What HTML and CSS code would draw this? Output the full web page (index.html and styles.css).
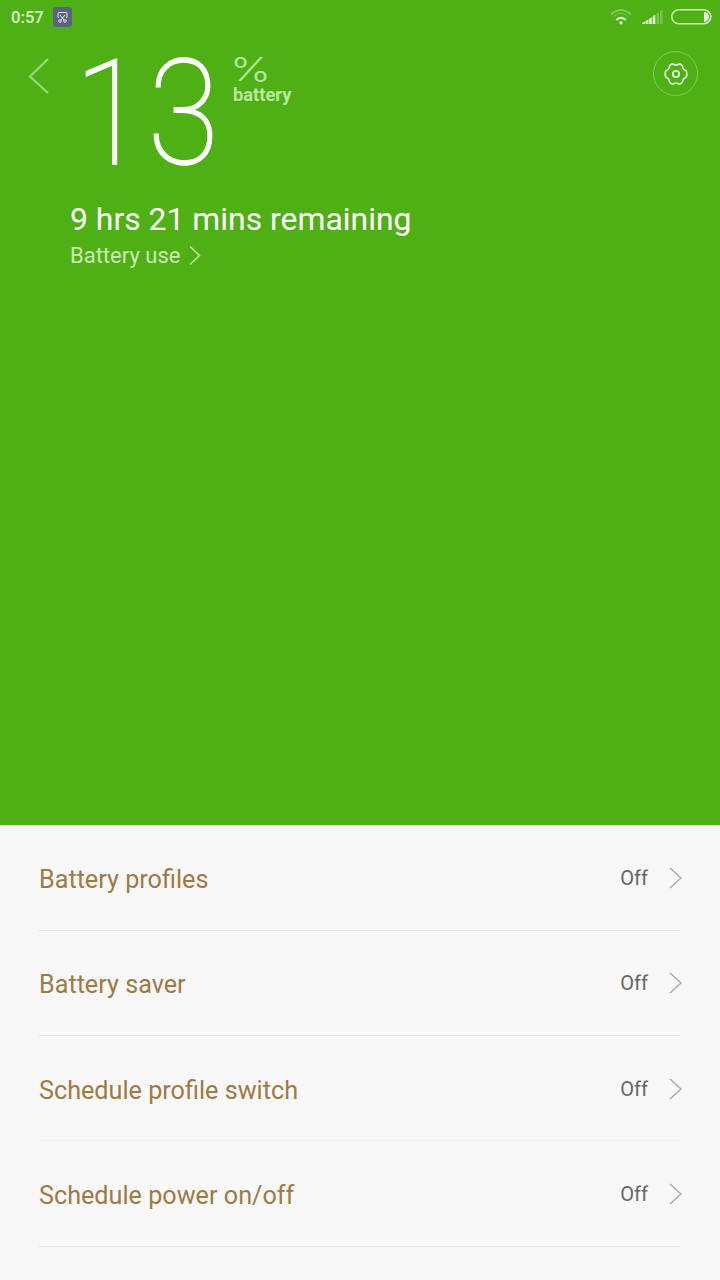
FILE: index.html
```html
<!DOCTYPE html>
<html lang="en">
<head>
  <meta charset="UTF-8" />
  <meta name="viewport" content="width=device-width, initial-scale=1.0" />
  <title>Battery</title>
  <link rel="stylesheet" href="styles.css">
</head>
<body>
  <div class="top">
    <div class="status-bar">
      <span class="clock">0:57</span>
      <svg class="app-icon" width="19" height="20" viewBox="0 0 19 20">
        <rect width="19" height="20" rx="3" fill="#5d6283"/>
        <path d="M6 10.5H5V6.5Q5 5.5 6 5.5H13Q14 5.5 14 6.5V10.5H13M7 8L11 13M12 8L8 13" fill="none" stroke="#dce8e4" stroke-width="1"/>
        <circle cx="7" cy="14" r="1.3" fill="none" stroke="#dce8e4"/>
        <circle cx="12" cy="14" r="1.3" fill="none" stroke="#dce8e4"/>
      </svg>
      <div class="status-icons">
        <svg class="wifi" width="22" height="16" viewBox="0 0 22 16" fill="none" stroke="#fff">
          <path d="M1 5.5Q11 -3.5 21 5.5" stroke-width="2" opacity=".3"/>
          <path d="M3.8 7.5Q11 1 18.2 7.5" stroke-width="1.6" opacity=".18"/>
          <path d="M6.3 11Q11 6.5 15.7 11" stroke-width="2.1" opacity=".9"/>
          <circle cx="11" cy="13.8" r="1.6" fill="#fff" stroke="none"/>
        </svg>
        <svg class="signal" width="21" height="14" viewBox="0 0 21 14" fill="#fff">
          <path d="M0 14V13L3 11.500V14Z" opacity=".85"/>
          <path d="M3.500 14V11L6.500 9.500V14Z" opacity=".85"/>
          <path d="M7.200 14V8.500L9.800 7.500V14Z" opacity=".85"/>
          <path d="M10.700 14V6L13.300 5V14Z" opacity=".85"/>
          <path d="M14.500 14V3.500L17 2.500V14Z" opacity=".25"/>
          <path d="M18 14V1L20.500 0V14Z" opacity=".25"/>
        </svg>
        <svg class="battery-icon" width="41" height="16" viewBox="0 0 41 16">
          <rect x=".8" y=".8" width="39" height="14" rx="7" fill="none" stroke="#d4f0c0" stroke-width="1.500"/>
          <path d="M33 3H34Q38 4 38 7.800Q38 12 34 12.800H33Z" fill="#e6f7dc"/>
        </svg>
      </div>
    </div>

    <div class="header">
      <svg class="back" width="22" height="38" viewBox="0 0 22 38">
        <path d="M20 2L2 19.500L20 36" fill="none" stroke="#9ad676" stroke-width="2.300"/>
      </svg>
      <div class="level">13</div>
      <div class="unit">
        <span class="percent">%</span>
        <span class="unit-label">battery</span>
      </div>
      <div class="settings">
        <svg width="24" height="24" viewBox="0 0 24 24" fill="none" stroke="#e6f8dc" stroke-width="1.700">
          <path d="M7.600 2.200Q8.800 1.500 9.800 2.300Q12 3.700 14.200 2.300Q15.200 1.500 16.400 2.200L17.800 3.100Q18.700 3.700 18.600 5Q18.900 7.300 21.200 8.200Q22.700 8.900 22.700 10.400V13.600Q22.700 15.100 21.200 15.800Q18.900 16.700 18.600 19Q18.700 20.300 17.800 20.900L16.400 21.800Q15.200 22.500 14.200 21.700Q12 20.300 9.800 21.700Q8.800 22.500 7.600 21.800L6.200 20.900Q5.300 20.300 5.400 19Q5.100 16.700 2.800 15.800Q1.300 15.100 1.300 13.600V10.400Q1.300 8.900 2.800 8.200Q5.100 7.300 5.400 5Q5.300 3.700 6.200 3.100Z"/>
          <circle cx="12" cy="12" r="3.200"/>
        </svg>
      </div>
    </div>

    <div class="remaining">9 hrs 21 mins remaining</div>
    <div class="usage">
      <span>Battery use</span>
      <svg width="12" height="20" viewBox="0 0 12 20">
        <path d="M1 .5L10.500 9.500L1 18.500" fill="none" stroke="#c0e8a8" stroke-width="1.500"/>
      </svg>
    </div>
  </div>

  <div class="list">
    <div class="row">
      <span class="name">Battery profiles</span>
      <span class="value">Off</span>
      <svg class="arrow" viewBox="0 0 13 22"><path d="M1 1L12 11L1 21"/></svg>
    </div>
    <div class="row">
      <span class="name">Battery saver</span>
      <span class="value">Off</span>
      <svg class="arrow" viewBox="0 0 13 22"><path d="M1 1L12 11L1 21"/></svg>
    </div>
    <div class="row light">
      <span class="name">Schedule profile switch</span>
      <span class="value">Off</span>
      <svg class="arrow" viewBox="0 0 13 22"><path d="M1 1L12 11L1 21"/></svg>
    </div>
    <div class="row">
      <span class="name">Schedule power on/off</span>
      <span class="value">Off</span>
      <svg class="arrow" viewBox="0 0 13 22"><path d="M1 1L12 11L1 21"/></svg>
    </div>
  </div>
</body>
</html>
```
FILE: styles.css
```css
* {
  box-sizing: border-box;
}
body {
  margin: 0;
  height: 1280px;
  overflow: hidden;
  background: #f8f8f8;
  font-family: Roboto, "Noto Sans", sans-serif;
}
svg {
  display: block;
  flex-shrink: 0;
}
.top {
  height: 825px;
  background: #4fb015;
  color: white;
}
.status-bar {
  display: flex;
  align-items: center;
  height: 34px;
  padding: 0 8px 0 11px;
}
.clock {
  width: 42px;
  font-size: 16.5px;
  font-weight: 600;
  color: #d4f3c2;
}
.status-icons {
  display: flex;
  align-items: center;
  margin-left: auto;
}
.signal {
  margin: 0 8px 0 10px;
}
.header {
  display: flex;
  align-items: flex-start;
  height: 164px;
  padding: 0 22px 0 28px;
}
.back {
  margin-top: 23px;
}
.level {
  width: 183px;
  padding-left: 28px;
  font-size: 147px;
  font-weight: 250;
  line-height: 161px;
  letter-spacing: 3px;
  -webkit-text-stroke: 1.8px white;
  transform: scaleX(0.88);
  transform-origin: left;
}
.unit {
  display: flex;
  flex-direction: column;
  align-items: flex-start;
  padding-top: 20px;
}
.percent {
  font-family: Inter, sans-serif;
  font-size: 33px;
  font-weight: 300;
  line-height: 31px;
  color: #b5e69a;
  transform: scaleX(1.33);
  transform-origin: left;
  margin-left: -3px;
}
.unit-label {
  font-size: 18.3px;
  font-weight: 700;
  line-height: 20px;
  color: #b9e99e;
}
.settings {
  display: flex;
  align-items: center;
  justify-content: center;
  width: 45px;
  height: 45px;
  margin: 17px 0 0 auto;
  border: 1px solid #84ca5b;
  border-radius: 50%;
}
.remaining {
  padding-left: 70px;
  font-size: 31.9px;
  line-height: 42px;
}
.usage {
  display: flex;
  align-items: center;
  gap: 9px;
  padding-left: 70px;
  font-size: 22px;
  line-height: 31px;
  color: #c8ecb3;
}
.list {
  padding: 0.4px 40px 0 39px;
}
.row {
  display: flex;
  align-items: center;
  height: 105.33px;
  padding-top: 1px;
  border-bottom: 1px solid #e5e5e5;
}
.row.light {
  border-bottom-color: #f1f1f1;
}
.name {
  padding-top: 3px;
  font-size: 25.2px;
  color: #a07a45;
}
.value {
  margin-left: auto;
  font-size: 20px;
  color: #666;
}
.arrow {
  width: 13px;
  height: 22px;
  margin: 0 -2px 0 21px;
  fill: none;
  stroke: #aaa;
  stroke-width: 1.5;
}
```
